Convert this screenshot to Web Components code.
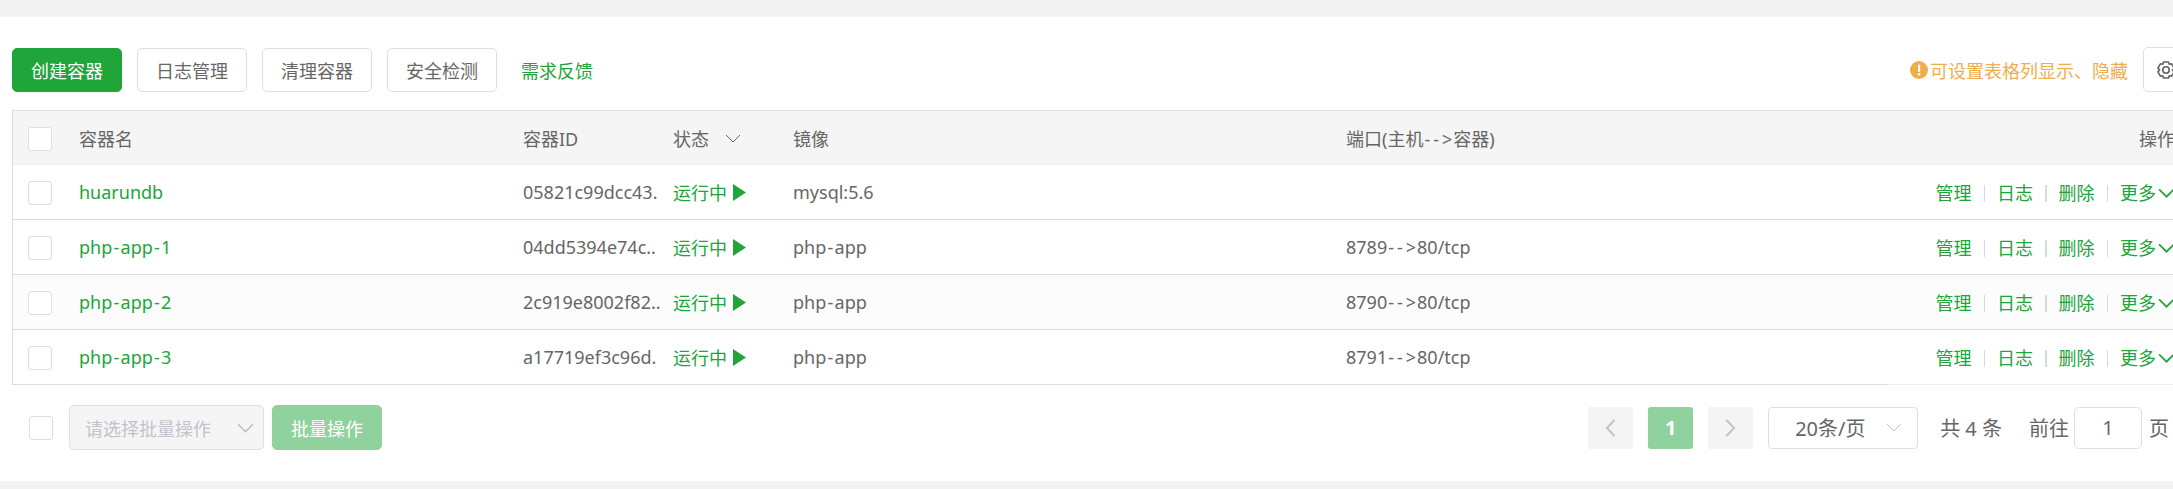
<!DOCTYPE html>
<html lang="zh-CN">
<head>
<meta charset="utf-8">
<title>容器列表</title>
<style>
  html, body { margin: 0; height: 489px; overflow: hidden; background: #f2f2f2; }
  body { font: 18px "Noto Sans", "Noto Sans CJK SC", sans-serif; color: #666; }
</style>
</head>
<body>
<docker-panel>
  <docker-toolbar>
    <ui-button type="primary">创建容器</ui-button>
    <ui-button>日志管理</ui-button>
    <ui-button>清理容器</ui-button>
    <ui-button>安全检测</ui-button>
  </docker-toolbar>
  <docker-table>
    <docker-row name="huarundb" cid="05821c99dcc43." image="mysql:5.6" port=""></docker-row>
    <docker-row name="php-app-1" cid="04dd5394e74c.." image="php-app" port="8789-->80/tcp"></docker-row>
    <docker-row name="php-app-2" cid="2c919e8002f82.." image="php-app" port="8790-->80/tcp" striped></docker-row>
    <docker-row name="php-app-3" cid="a17719ef3c96d." image="php-app" port="8791-->80/tcp" last></docker-row>
  </docker-table>
  <docker-footer></docker-footer>
</docker-panel>

<script>
const CHEVRON_DOWN = `<path d="M1 1l7 7 7-7" fill="none" stroke="currentColor"/>`;
const GRID = "grid-template-columns: 66px 444px 150px 120px 553px 541px 303px;";

// the hyphens and arrows sit wider in the reference than in Noto Sans
const spaced = (text) => text
  .replace(/-->/g, '<span class="arrow">--&gt;</span>')
  .replace(/-(?!-|&)(?=[a-z0-9])/g, '<span class="hy">-</span>');

class DockerPanel extends HTMLElement {
  constructor() {
    super();
    this.attachShadow({ mode: "open" }).innerHTML = `
      <style>
        :host {
          display: block;
          box-sizing: border-box;
          width: 2190px;
          height: 464px;
          margin-top: 17px;
          padding: 30px 0 0 12px;
          background: #fff;
        }
      </style>
      <slot></slot>
    `;
  }
}

class UiButton extends HTMLElement {
  constructor() {
    super();
    this.attachShadow({ mode: "open" }).innerHTML = `
      <style>
        :host {
          display: flex;
          align-items: center;
          justify-content: center;
          box-sizing: border-box;
          width: 110px;
          height: 44px;
          border: 1px solid #dcdfe6;
          border-radius: 5px;
          background: #fff;
          color: #666;
        }
        :host([type="primary"]) {
          background: #20a53a;
          border-color: #20a53a;
          color: #fff;
        }
        :host([type="batch"]) {
          height: 45px;
          background: #90d29d;
          border-color: #90d29d;
          color: #fff;
        }
      </style>
      <slot></slot>
    `;
  }
}

class DockerToolbar extends HTMLElement {
  constructor() {
    super();
    this.attachShadow({ mode: "open" }).innerHTML = `
      <style>
        :host {
          display: flex;
          align-items: flex-end;
          gap: 15px;
          height: 45px;
          margin-bottom: 18px;
        }
        .feedback { align-self: center; margin: 1px 0 0 9px; color: #20a53a; }
        .tip {
          display: flex;
          align-items: center;
          gap: 2px;
          align-self: center;
          margin-left: auto;
          color: #f0ad4e;
        }
        .gear {
          display: flex;
          align-items: center;
          box-sizing: border-box;
          width: 45px;
          height: 45px;
          margin-right: 2px;
          padding-left: 12px;
          border: 1px solid #dcdfe6;
          border-radius: 5px;
        }
      </style>
      <slot></slot>
      <span class="feedback">需求反馈</span>
      <div class="tip">
        <svg width="18" height="18" viewBox="0 0 18 18">
          <circle cx="9" cy="9" r="9" fill="#f0ad4e"/>
          <rect x="8" y="3.5" width="2.2" height="7.5" rx="1" fill="#fff"/>
          <circle cx="9.1" cy="13.2" r="1.3" fill="#fff"/>
        </svg>
        <span>可设置表格列显示、隐藏</span>
      </div>
      <div class="gear">
        <svg width="20" height="18" viewBox="0 0 20 18" fill="none" stroke="#606266" stroke-width="1.6" stroke-linejoin="round">
          <path d="M7.500 1H12.500L13.200 3.300L15.600 2.800L18.100 7.100L16.400 9L18.100 10.900L15.600 15.200L13.200 14.700L12.500 17H7.500L6.800 14.700L4.400 15.200L1.900 10.900L3.600 9L1.900 7.100L4.400 2.800L6.800 3.300Z"/>
          <circle cx="10" cy="9" r="3.200"/>
        </svg>
      </div>
    `;
  }
}

class UiCheckbox extends HTMLElement {
  constructor() {
    super();
    this.attachShadow({ mode: "open" }).innerHTML = `
      <style>
        :host {
          display: block;
          box-sizing: border-box;
          width: 24px;
          height: 24px;
          border: 1px solid #dcdfe6;
          border-radius: 3px;
          background: #fff;
        }
      </style>
    `;
  }
}

class DockerTable extends HTMLElement {
  constructor() {
    super();
    this.attachShadow({ mode: "open" }).innerHTML = `
      <style>
        :host {
          display: block;
          box-sizing: border-box;
          border-top: 1px solid #ddd;
          border-left: 1px solid #ddd;
        }
        .head {
          display: grid;
          ${GRID}
          height: 54px;
          box-sizing: border-box;
          border-bottom: 1px solid #ebeef5;
          background: #f5f5f5;
          align-items: center;
        }
        .check { padding: 2px 0 0 15px; }
        .status { display: flex; align-items: center; gap: 16px; }
        .status svg { color: #666; margin-top: 1px; }
        .arrow { letter-spacing: 3px; margin: 0 -2px 0 1px; }
        .op { text-align: right; padding-right: 15px; white-space: nowrap; }
      </style>
      <div class="head">
        <div class="check"><ui-checkbox></ui-checkbox></div>
        <div>容器名</div>
        <div>容器ID</div>
        <div class="status">状态
          <svg width="16" height="9" viewBox="0 0 16 9">${CHEVRON_DOWN}</svg>
        </div>
        <div>镜像</div>
        <div>端口(主机${spaced("-->")}容器)</div>
        <div class="op">操作</div>
      </div>
      <slot></slot>
    `;
  }
}

class RowActions extends HTMLElement {
  constructor() {
    super();
    this.attachShadow({ mode: "open" }).innerHTML = `
      <style>
        :host {
          display: flex;
          align-items: center;
          justify-content: flex-end;
          gap: 12px;
          color: #20a53a;
          white-space: nowrap;
        }
        i { width: 1.5px; height: 17px; background: #d5dae2; margin-top: 2px; }
        .more { display: flex; align-items: center; gap: 2px; }
        svg { margin-top: 1px; }
      </style>
      <span>管理</span><i></i>
      <span>日志</span><i></i>
      <span>删除</span><i></i>
      <span class="more">更多
        <svg width="17" height="10" viewBox="0 0 16 9">
          <path d="M1 1l7 7 7-7" fill="none" stroke="currentColor" stroke-width="1.6"/>
        </svg>
      </span>
    `;
  }
}

class DockerRow extends HTMLElement {
  connectedCallback() {
    if (this.shadowRoot) return;
    const get = (k) => this.getAttribute(k) || "";
    this.attachShadow({ mode: "open" }).innerHTML = `
      <style>
        :host {
          display: grid;
          ${GRID}
          height: 55px;
          background: #fff;
          --act-line: #ddd;
        }
        :host([striped]) { background: #fcfcfc; }
        :host([last]) { --act-line: #ebeef5; }
        .cell {
          display: flex;
          align-items: center;
          box-sizing: border-box;
          border-bottom: 1px solid #ddd;
          white-space: nowrap;
        }
        .check { padding: 2px 0 0 15px; }
        .name { color: #20a53a; }
        .status { color: #20a53a; gap: 6px; }
        .hy { padding: 0 1.25px; }
        .arrow { letter-spacing: 3px; margin: 0 -2px 0 1px; }
        .op {
          justify-content: flex-end;
          padding-right: 15px;
          border-bottom-color: var(--act-line);
        }
      </style>
      <div class="cell check"><ui-checkbox></ui-checkbox></div>
      <div class="cell name"><span>${spaced(get("name"))}</span></div>
      <div class="cell">${get("cid")}</div>
      <div class="cell status">运行中
        <svg width="13" height="17" viewBox="0 0 13 17"><path d="M0 0l13 8.500L0 17z" fill="#20a53a"/></svg>
      </div>
      <div class="cell"><span>${spaced(get("image"))}</span></div>
      <div class="cell"><span>${spaced(get("port"))}</span></div>
      <div class="cell op"><row-actions></row-actions></div>
    `;
  }
}

class DockerPagination extends HTMLElement {
  constructor() {
    super();
    this.attachShadow({ mode: "open" }).innerHTML = `
      <style>
        :host {
          display: flex;
          align-items: center;
          margin-left: auto;
          margin-right: 21px;
          font-size: 20px;
          color: #666;
          white-space: nowrap;
        }
        .btn {
          display: flex;
          align-items: center;
          justify-content: center;
          box-sizing: border-box;
          width: 45px;
          height: 42px;
          margin-right: 15px;
          border-radius: 3px;
          background: #f4f4f5;
          color: #c0c4cc;
        }
        .btn.on { background: #90d29d; color: #fff; font-weight: 700; }
        .size {
          display: flex;
          align-items: center;
          justify-content: space-between;
          box-sizing: border-box;
          width: 150px;
          height: 42px;
          padding: 0 15px 0 26px;
          border: 1px solid #dcdfe6;
          border-radius: 4px;
        }
        .size svg { color: #c0c4cc; }
        .total { margin: 0 27px 0 22px; }
        .go {
          display: flex;
          align-items: center;
          justify-content: center;
          box-sizing: border-box;
          width: 68px;
          height: 42px;
          margin: 0 7px 0 5px;
          border: 1px solid #dcdfe6;
          border-radius: 5px;
        }
      </style>
      <div class="btn">
        <svg width="11" height="18" viewBox="0 0 11 18"><path d="M9.500 1L2 9l7.500 8" fill="none" stroke="currentColor" stroke-width="2"/></svg>
      </div>
      <div class="btn on">1</div>
      <div class="btn">
        <svg width="11" height="18" viewBox="0 0 11 18"><path d="M1.500 1L9 9l-7.500 8" fill="none" stroke="currentColor" stroke-width="2"/></svg>
      </div>
      <div class="size">
        <span>20条/页</span>
        <svg width="16" height="9" viewBox="0 0 16 9">${CHEVRON_DOWN}</svg>
      </div>
      <span class="total">共 4 条</span>
      <span>前往</span>
      <div class="go">1</div>
      <span>页</span>
    `;
  }
}

class DockerFooter extends HTMLElement {
  constructor() {
    super();
    this.attachShadow({ mode: "open" }).innerHTML = `
      <style>
        :host {
          display: flex;
          align-items: center;
          height: 45px;
          margin-top: 20px;
          padding-left: 17px;
        }
        .select {
          display: flex;
          align-items: center;
          justify-content: space-between;
          box-sizing: border-box;
          width: 195px;
          height: 45px;
          margin: 0 8px 0 16px;
          padding: 0 9px 0 15px;
          border: 1px solid #dcdfe6;
          border-radius: 5px;
          background: #f5f5f5;
          color: #c0c4cc;
        }
        .select svg { color: #b9bcc2; stroke-width: 1.4; }
      </style>
      <ui-checkbox></ui-checkbox>
      <div class="select">
        <span>请选择批量操作</span>
        <svg width="17" height="10" viewBox="0 0 16 9">${CHEVRON_DOWN}</svg>
      </div>
      <ui-button type="batch">批量操作</ui-button>
      <docker-pagination></docker-pagination>
    `;
  }
}

customElements.define("docker-panel", DockerPanel);
customElements.define("ui-button", UiButton);
customElements.define("docker-toolbar", DockerToolbar);
customElements.define("ui-checkbox", UiCheckbox);
customElements.define("docker-table", DockerTable);
customElements.define("row-actions", RowActions);
customElements.define("docker-row", DockerRow);
customElements.define("docker-pagination", DockerPagination);
customElements.define("docker-footer", DockerFooter);
</script>
</body>
</html>
